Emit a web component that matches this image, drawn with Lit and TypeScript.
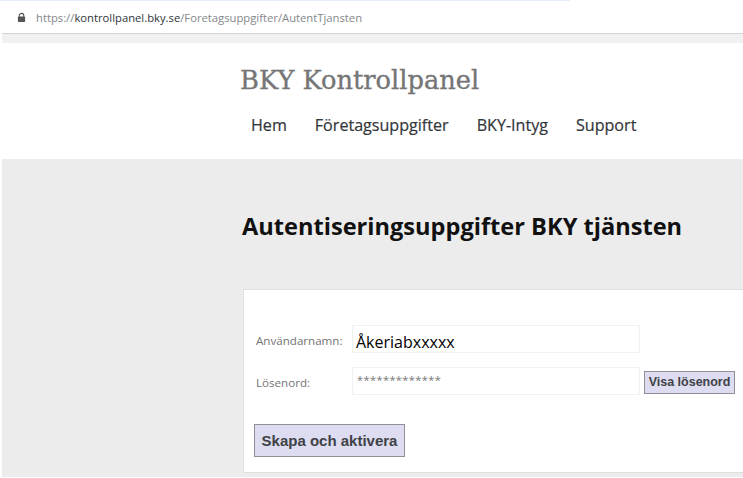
import { LitElement, html, css } from "lit";
import { customElement } from "lit/decorators.js";

@customElement("app-root")
export class AppRoot extends LitElement {
  static styles = css`
    :host { display: block; width: 743px; height: 478px; overflow: hidden; background: #fff; font-family: "Open Sans", sans-serif; }
    .accent { height: 1px; width: 570px; background: #e6eef8; }
    .urlbar { height: 33px; display: flex; align-items: center; gap: 10px; padding-left: 15px; margin-left: 2px; box-sizing: border-box; border-bottom: 1px solid #d4d4d4; font-size: 11.25px; color: #84888b; }
    .urlbar svg { flex: none; }
    .urlbar b { font-weight: 400; color: #30353a; }
    .strip { height: 9px; margin-left: 2px; background: #f1f1f1; }
    .top { height: 116px; box-sizing: border-box; padding: 21px 0 0 240px; }
    h1 { margin: 0; font: 400 25.7px/32px "DejaVu Serif", serif; color: #757575; -webkit-text-stroke: 0.35px #757575; }
    nav { display: flex; gap: 28px; margin-top: 18px; padding-left: 11px; font-size: 16.1px; line-height: 22px; font-weight: 500; color: #33363a; -webkit-text-stroke: 0.2px #33363a; }
    main { margin-left: 2px; height: 318px; background: #ececec; box-sizing: border-box; padding: 51px 0 0 240px; }
    h2 { margin: 0; font: 700 23.6px/32px "Open Sans", sans-serif; color: #111; }
    .card { margin-top: 47px; margin-left: 1px; height: 184px; box-sizing: border-box; background: #fff; border: 1px solid #e0e0e0; border-right: 0; padding: 35px 0 0 10px; }
    .row { display: flex; align-items: center; }
    .row + .row { margin-top: 14px; }
    label { width: 98px; flex: none; font-size: 11.6px; color: #747474; padding: 2px 0 0 2px; box-sizing: border-box; }
    .field { width: 288px; height: 28px; box-sizing: border-box; border: 1px solid #f1f1f1; background: #fff; flex: none; padding-left: 3px; }
    .user { font: 400 16px/32px "Open Sans", sans-serif; color: #000; }
    .pass { font-size: 11px; line-height: 24px; color: #777; letter-spacing: 0.42px; padding-left: 4px; }
    button { font-family: "Liberation Sans", sans-serif; font-weight: 700; background: #dddcf0; border: 1px solid #8f8f98; color: #3f4247; padding: 0; box-sizing: border-box; }
    .show { width: 91px; height: 23px; margin: 2px 0 0 4px; font-size: 12.5px; }
    .create { display: block; width: 151px; height: 33px; margin-top: 29px; font-size: 15px; }
  `;

  render() {
    return html`
      <div class="accent"></div>
      <div class="urlbar">
        <svg width="9" height="11" viewBox="0 0 10 11"><path d="M2.5 5V3.4a2.5 2.5 0 0 1 5 0V5" fill="none" stroke="#555" stroke-width="1.2"/><rect x="1" y="4.5" width="8" height="6" rx=".8" fill="#555"/></svg>
        <span>https://<b>kontrollpanel.bky.se</b>/Foretagsuppgifter/AutentTjansten</span>
      </div>
      <div class="strip"></div>
      <header class="top">
        <h1>BKY Kontrollpanel</h1>
        <nav><span>Hem</span><span>Företagsuppgifter</span><span>BKY-Intyg</span><span>Support</span></nav>
      </header>
      <main>
        <h2>Autentiseringsuppgifter BKY tjänsten</h2>
        <section class="card">
          <div class="row"><label>Användarnamn:</label><div class="field user">Åkeriabxxxxx</div></div>
          <div class="row"><label>Lösenord:</label><div class="field pass">*************</div><button class="show">Visa lösenord</button></div>
          <button class="create">Skapa och aktivera</button>
        </section>
      </main>
    `;
  }
}
